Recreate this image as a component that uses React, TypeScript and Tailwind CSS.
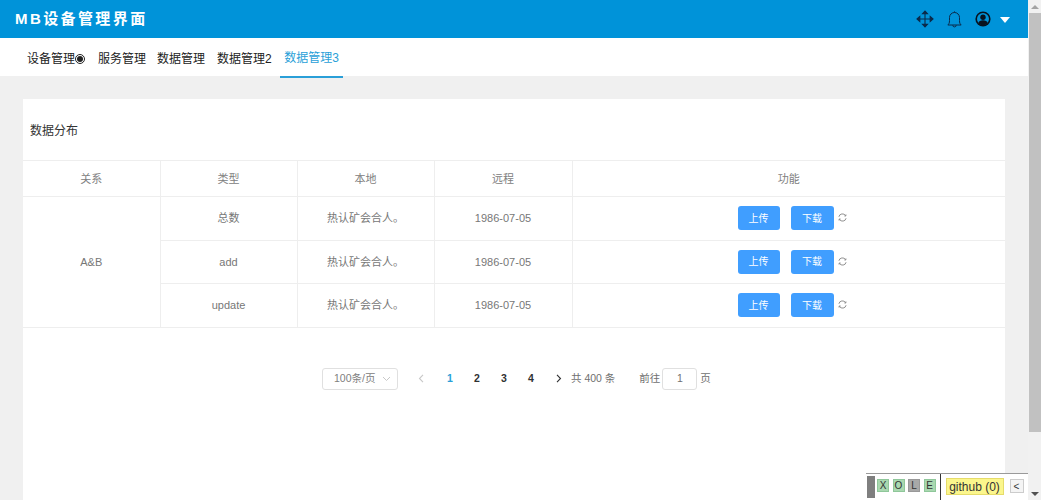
import React from "react";

const font = { fontFamily: '"Liberation Sans", "Noto Sans CJK SC", sans-serif' };

function Move() {
  return (
    <svg width="18" height="18" viewBox="0 0 18 18" fill="none" stroke="#0b2a4a" strokeWidth="1.1">
      <path d="M9 1v16M1 9h16" />
      <path d="M9 1 6.500 3.800h5zM9 17l-2.500-2.800h5zM1 9l2.800-2.500v5zM17 9l-2.800-2.500v5z" fill="#0b2a4a" />
    </svg>
  );
}
function Bell() {
  return (
    <svg width="15" height="17" viewBox="0 0 15 17" fill="none" stroke="#0b2a4a" strokeWidth="1">
      <path d="M.8 14c1.300-1 1.700-2.200 1.700-4.500V6.500a5 5 0 0 1 10 0v3c0 2.300.4 3.500 1.700 4.500z" />
      <path d="M5.800 14.200a1.700 1.700 0 0 0 3.400 0" />
      <path d="M7.500.4v1.100" />
    </svg>
  );
}
function User() {
  return (
    <svg width="16" height="16" viewBox="0 0 16 16">
      <circle cx="8" cy="8" r="7.600" fill="#08121f" />
      <circle cx="8" cy="8" r="6" fill="#0093d9" />
      <circle cx="8" cy="6.200" r="2.700" fill="#08121f" />
      <path d="M3.200 12.200a5 4 0 0 1 9.600 0A6 6 0 0 1 8 14.200a6 6 0 0 1-4.800-2z" fill="#08121f" />
    </svg>
  );
}
function Refresh() {
  return (
    <svg width="9" height="9" viewBox="0 0 10 10" fill="none" stroke="#666" strokeWidth="0.8">
      <path d="M1 4.200A4 4 0 0 1 8.400 3" />
      <path d="M9 5.800A4 4 0 0 1 1.600 7" />
      <path d="M8.800 1.500v1.800H7M1.200 8.500V6.700H3" strokeWidth="0.7" />
    </svg>
  );
}

const rows = ["总数", "add", "update"];
const th = "h-[36px] p-0 pt-[1px] border-r border-b border-[#eeeeee] text-center text-[11px] font-normal text-[#808080]";
const td = "p-0 border-r border-b border-[#eeeeee] text-center text-[11px] text-[#777777]";
const tab = "flex items-center pt-[4px]";
const key = "flex h-[13px] w-[12px] items-center justify-center border border-[#8fc79a] bg-[#a9d8b0]";

export default function App() {
  return (
    <div className="relative flex h-[500px] w-[1041px] overflow-hidden bg-[#f0f0f0]" style={font}>
      <div className="flex w-[1028px] flex-col">
        <header className="flex h-[38px] shrink-0 items-center bg-[#0093d9] pl-[15px] pr-[18px] text-white">
          <div className="text-[15px] font-bold tracking-[2.400px]">MB设备管理界面</div>
          <div className="ml-auto flex items-center">
            <Move />
            <div className="ml-[13px]"><Bell /></div>
            <div className="ml-[13px]"><User /></div>
            <div className="ml-[9px] mt-[2px] h-0 w-0 border-x-[5px] border-t-[6px] border-x-transparent border-t-white" />
          </div>
        </header>

        <nav className="flex h-[38px] shrink-0 items-stretch bg-white pl-[27px] text-[12px] text-[#222]">
          <div className={tab + " w-[71px]"}>
            设备管理
            <span className="flex h-[10px] w-[10px] items-center justify-center rounded-full border border-[#222]">
              <span className="h-[6px] w-[6px] rounded-full bg-[#222]" />
            </span>
          </div>
          <div className={tab + " w-[59px]"}>服务管理</div>
          <div className={tab + " w-[60px]"}>数据管理</div>
          <div className={tab + " w-[63px]"}>数据管理2</div>
          <div className="flex h-[40px] w-[63px] items-center justify-center border-b-2 border-[#2a9fd8] pt-[2px] text-[#2a9fd8]">
            数据管理3
          </div>
        </nav>

        <main className="flex-1 px-[23px] pt-[23px]">
          <section className="h-[420px] w-[982px] bg-white">
            <h2 className="flex h-[61px] items-center pl-[7px] pt-[2px] text-[12px] font-normal text-[#333]">数据分布</h2>
            <table className="w-[982px] table-fixed border-collapse border-t border-[#eeeeee]">
              <colgroup>
                <col className="w-[137px]" />
                <col className="w-[137px]" />
                <col className="w-[137px]" />
                <col className="w-[138px]" />
                <col />
              </colgroup>
              <thead>
                <tr>
                  <th className={th}>关系</th>
                  <th className={th}>类型</th>
                  <th className={th}>本地</th>
                  <th className={th}>远程</th>
                  <th className={th + " border-r-0"}>功能</th>
                </tr>
              </thead>
              <tbody>
                {rows.map((r, i) => (
                  <tr key={r} className="h-[43.500px]">
                    {i === 0 && <td rowSpan={3} className={td}>A&amp;B</td>}
                    <td className={td}>{r}</td>
                    <td className={td + " text-[#555555]"}>热认矿会合人。</td>
                    <td className={td}>1986-07-05</td>
                    <td className={td + " border-r-0"}>
                      <div className="flex items-center pl-[165px]">
                        <button className="h-[24px] w-[42px] rounded-[3px] bg-[#409eff] text-[10px] text-white">上传</button>
                        <button className="ml-[11px] h-[24px] w-[43px] rounded-[3px] bg-[#409eff] text-[10px] text-white">下载</button>
                        <span className="ml-[4px] -mt-[1px]"><Refresh /></span>
                      </div>
                    </td>
                  </tr>
                ))}
              </tbody>
            </table>

            <div className="mt-[40px] flex h-[22px] items-center pl-[299px] text-[10.500px] text-[#707070]">
              <div className="flex h-[22px] w-[76px] items-center justify-between rounded-[3px] border border-[#e0e0e0] pl-[11px] pr-[6px] text-[#808080]">
                100条/页
                <svg width="9" height="6" viewBox="0 0 9 6" fill="none" stroke="#c8c8c8" strokeWidth="1"><path d="m1 1 3.500 3.500L8 1" /></svg>
              </div>
              <svg className="ml-[20px]" width="6" height="9" viewBox="0 0 6 9" fill="none" stroke="#c8c8c8" strokeWidth="1.100"><path d="M5 .8 1.500 4.500 5 8.200" /></svg>
              <div className="ml-[23px] flex font-bold text-[#303133]">
                <span className="w-[27px] text-[#2a9fd8]">1</span>
                <span className="w-[27px]">2</span>
                <span className="w-[27px]">3</span>
                <span className="w-[27px]">4</span>
              </div>
              <svg className="ml-[1px]" width="6" height="9" viewBox="0 0 6 9" fill="none" stroke="#303133" strokeWidth="1.100"><path d="m1 .8 3.500 3.700L1 8.200" /></svg>
              <span className="ml-[9px]">共 400 条</span>
              <span className="ml-[24px]">前往</span>
              <div className="ml-[2px] flex h-[22px] w-[35px] items-center justify-center rounded-[3px] border border-[#e0e0e0]">1</div>
              <span className="ml-[3px]">页</span>
            </div>
          </section>
        </main>
      </div>

      <div className="relative flex w-[13px] flex-col bg-[#f1f1f1]">
        <div className="flex h-[13px] items-center justify-center">
          <div className="h-0 w-0 border-x-[4px] border-b-[4px] border-x-transparent border-b-[#a3a3a3]" />
        </div>
        <div className="ml-[1px] h-[419px] bg-[#c1c1c1]" />
        <div className="mt-auto flex h-[13px] items-center justify-center">
          <div className="h-0 w-0 border-x-[4px] border-t-[4px] border-x-transparent border-t-[#505050]" />
        </div>
      </div>

      <div className="absolute left-[866px] top-[473px] flex h-[27px] w-[162px] items-start border-t border-[#9a9a9a] bg-white pl-[1px] text-[12px] text-[#333]">
        <div className="mt-[2px] h-[22px] w-[8px] bg-[#7f7f7f]" />
        <div className="ml-[2px] mt-[5px] flex gap-[3.500px] text-[10px] text-[#333]">
          <span className={key}>X</span>
          <span className={key}>O</span>
          <span className="flex h-[13px] w-[12px] items-center justify-center border border-[#999] bg-[#a8a8a8]">L</span>
          <span className={key}>E</span>
        </div>
        <div className="ml-[4px] h-[26px] w-px bg-[#333]" />
        <div className="ml-[5px] mt-[4px] flex h-[17px] w-[58px] items-center justify-center border border-[#e6dc6a] bg-[#fbf68c]">github (0)</div>
        <div className="ml-[6px] mt-[5px] flex h-[14px] w-[14px] items-center justify-center border border-[#ccc] bg-[#f4f4f4] text-[10px]">&lt;</div>
      </div>
    </div>
  );
}
